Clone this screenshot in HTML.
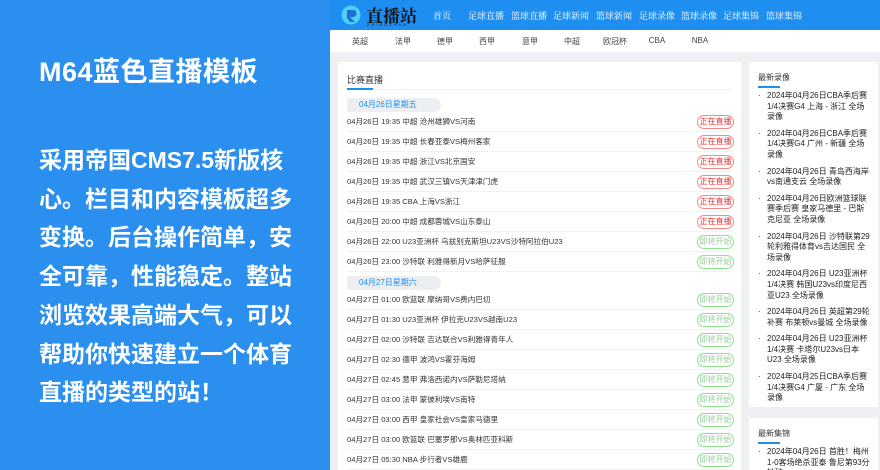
<!DOCTYPE html><html><head><meta charset="utf-8"><style>
*{margin:0;padding:0;box-sizing:border-box}
html,body{width:880px;height:470px;overflow:hidden}
body{font-family:"Liberation Sans","Noto Sans CJK SC",sans-serif;background:#eef0f3;position:relative}
.left{position:absolute;left:0;top:0;width:330px;height:470px;background:#2b8fef;color:#fff}
.left h1{position:absolute;left:39px;top:50px;font-size:27px;font-weight:bold;letter-spacing:0.5px}
.left p{position:absolute;left:39px;top:141px;white-space:nowrap;font-size:23px;font-weight:bold;line-height:38.7px}
.hdr{position:absolute;left:330px;top:0;width:550px;height:30px;background:#1e8ff0}
.hdr .nav{position:absolute;top:9px;font-size:9px;color:#fff;font-family:"Noto Serif CJK SC",serif}
.sub{position:absolute;left:330px;top:30px;width:550px;height:22px;background:#fff}
.sub span{position:absolute;top:6px;font-size:8px;color:#444;transform:translateX(-50%)}
.main{position:absolute;left:338px;top:62px;width:403px;height:410px;background:#fff}
.main .t{position:absolute;left:9px;top:11px;font-size:9px;color:#333}
.main .u{position:absolute;left:9px;top:26px;width:26px;height:2px;background:#1e8ff0}
.main .l{position:absolute;left:9px;top:27px;width:385px;height:1px;background:#eee}
.dh{position:absolute;left:9px;width:94px;height:14px;background:#eceef1;border-radius:0 7px 7px 0;font-size:8px;color:#1e8ff0;padding-left:12px;line-height:14px}
.r{position:absolute;left:9px;width:385px;height:20px;border-bottom:1px solid #f2f2f2;font-size:7.6px;color:#333;line-height:20px}
.b{position:absolute;right:-2px;top:3px;width:37px;height:14px;border-radius:7px;font-size:8px;line-height:12px;text-align:center}
.red{border:1px solid #f48a8a;color:#e33}
.grn{border:1px solid #8ee48e;color:#9c9}
.side{position:absolute;left:749px;width:129px;background:#fff}
.side .t{position:absolute;left:9px;top:10px;font-size:8px;color:#333}
.side .u{position:absolute;left:9px;top:24px;width:22px;height:2px;background:#1e8ff0}
.side ul{position:absolute;left:9px;top:29px;width:112px;list-style:none}
.side li{font-size:8px;line-height:10.6px;color:#222;padding-left:9px;position:relative;margin-bottom:6px}
.side li:before{content:"·";position:absolute;left:0}
</style></head><body>
<div class="left"><h1>M64蓝色直播模板</h1><p>采用帝国CMS7.5新版核<br>心。栏目和内容模板超多<br>变换。后台操作简单，安<br>全可靠，性能稳定。整站<br>浏览效果高端大气，可以<br>帮助你快速建立一个体育<br>直播的类型的站！</p></div>
<div class="hdr">
<svg style="position:absolute;left:11px;top:5px" width="20" height="20" viewBox="0 0 20 20"><circle cx="10" cy="10" r="9.5" fill="#4fd0f5"/><path d="M6 5h6a3.5 3.5 0 0 1 0 7h-3l5 5H9L6 13z" fill="#1e6fd0"/></svg>
<div style="position:absolute;left:36px;top:2px;font-size:17px;font-weight:bold;color:#111;font-family:'Noto Serif CJK SC',serif">直播站</div>
<div style="position:absolute;left:37px;top:22px;font-size:4px;color:#222;letter-spacing:2px">ZHIBOZHAN</div>
<span class="nav" style="left:103px">首页</span><span class="nav" style="left:138px">足球直播</span><span class="nav" style="left:181px">篮球直播</span><span class="nav" style="left:223px">足球新闻</span><span class="nav" style="left:266px">篮球新闻</span><span class="nav" style="left:309px">足球录像</span><span class="nav" style="left:351px">篮球录像</span><span class="nav" style="left:393px">足球集锦</span><span class="nav" style="left:436px">篮球集锦</span>
</div>
<div class="sub"><span style="left:30px">英超</span><span style="left:73px">法甲</span><span style="left:115px">德甲</span><span style="left:157px">西甲</span><span style="left:200px">意甲</span><span style="left:242px">中超</span><span style="left:285px">欧冠杯</span><span style="left:327px">CBA</span><span style="left:370px">NBA</span></div>
<div class="main"><div class="t">比赛直播</div><div class="l"></div><div class="u"></div>
<div class="dh" style="top:36px">04月26日星期五</div>
<div class="r" style="top:50px">04月26日 19:35 中超 沧州雄狮VS河南<span class="b red">正在直播</span></div>
<div class="r" style="top:70px">04月26日 19:35 中超 长春亚泰VS梅州客家<span class="b red">正在直播</span></div>
<div class="r" style="top:90px">04月26日 19:35 中超 浙江VS北京国安<span class="b red">正在直播</span></div>
<div class="r" style="top:110px">04月26日 19:35 中超 武汉三镇VS天津津门虎<span class="b red">正在直播</span></div>
<div class="r" style="top:130px">04月26日 19:35 CBA 上海VS浙江<span class="b red">正在直播</span></div>
<div class="r" style="top:150px">04月26日 20:00 中超 成都蓉城VS山东泰山<span class="b red">正在直播</span></div>
<div class="r" style="top:170px">04月26日 22:00 U23亚洲杯 乌兹别克斯坦U23VS沙特阿拉伯U23<span class="b grn">即将开始</span></div>
<div class="r" style="top:190px">04月26日 23:00 沙特联 利雅得新月VS哈萨征服<span class="b grn">即将开始</span></div>
<div class="dh" style="top:214px">04月27日星期六</div>
<div class="r" style="top:228px">04月27日 01:00 欧篮联 摩纳哥VS费内巴切<span class="b grn">即将开始</span></div>
<div class="r" style="top:248px">04月27日 01:30 U23亚洲杯 伊拉克U23VS越南U23<span class="b grn">即将开始</span></div>
<div class="r" style="top:268px">04月27日 02:00 沙特联 吉达联合VS利雅得青年人<span class="b grn">即将开始</span></div>
<div class="r" style="top:288px">04月27日 02:30 德甲 波鸿VS霍芬海姆<span class="b grn">即将开始</span></div>
<div class="r" style="top:308px">04月27日 02:45 意甲 弗洛西诺内VS萨勒尼塔纳<span class="b grn">即将开始</span></div>
<div class="r" style="top:328px">04月27日 03:00 法甲 蒙彼利埃VS南特<span class="b grn">即将开始</span></div>
<div class="r" style="top:348px">04月27日 03:00 西甲 皇家社会VS皇家马德里<span class="b grn">即将开始</span></div>
<div class="r" style="top:368px">04月27日 03:00 欧篮联 巴塞罗那VS奥林匹亚科斯<span class="b grn">即将开始</span></div>
<div class="r" style="top:388px">04月27日 05:30 NBA 步行者VS雄鹿<span class="b grn">即将开始</span></div>
</div>
<div class="side" style="top:62px;height:345px;overflow:hidden"><div class="t">最新录像</div><div class="u"></div><ul>
<li>2024年04月26日CBA季后赛1/4决赛G4 上海 - 浙江 全场录像</li>
<li>2024年04月26日CBA季后赛1/4决赛G4 广州 - 新疆 全场录像</li>
<li>2024年04月26日 青岛西海岸vs南通支云 全场录像</li>
<li>2024年04月26日欧洲篮球联赛季后赛 皇家马德里 - 巴斯克尼亚 全场录像</li>
<li>2024年04月26日 沙特联第29轮利雅得体育vs吉达国民 全场录像</li>
<li>2024年04月26日 U23亚洲杯1/4决赛 韩国U23vs印度尼西亚U23 全场录像</li>
<li>2024年04月26日 英超第29轮补赛 布莱顿vs曼城 全场录像</li>
<li>2024年04月26日 U23亚洲杯1/4决赛 卡塔尔U23vs日本U23 全场录像</li>
<li>2024年04月25日CBA季后赛1/4决赛G4 广厦 - 广东 全场录像</li>
<li>2024年04月25日NBA东部首轮G2 热火 - 凯尔特人 全场录像</li>
</ul></div>
<div class="side" style="top:418px;height:60px;overflow:hidden"><div class="t">最新集锦</div><div class="u"></div><ul>
<li>2024年04月26日 首胜！梅州1-0客场绝杀亚泰 鲁尼第93分钟破</li></ul></div>
</body></html>
